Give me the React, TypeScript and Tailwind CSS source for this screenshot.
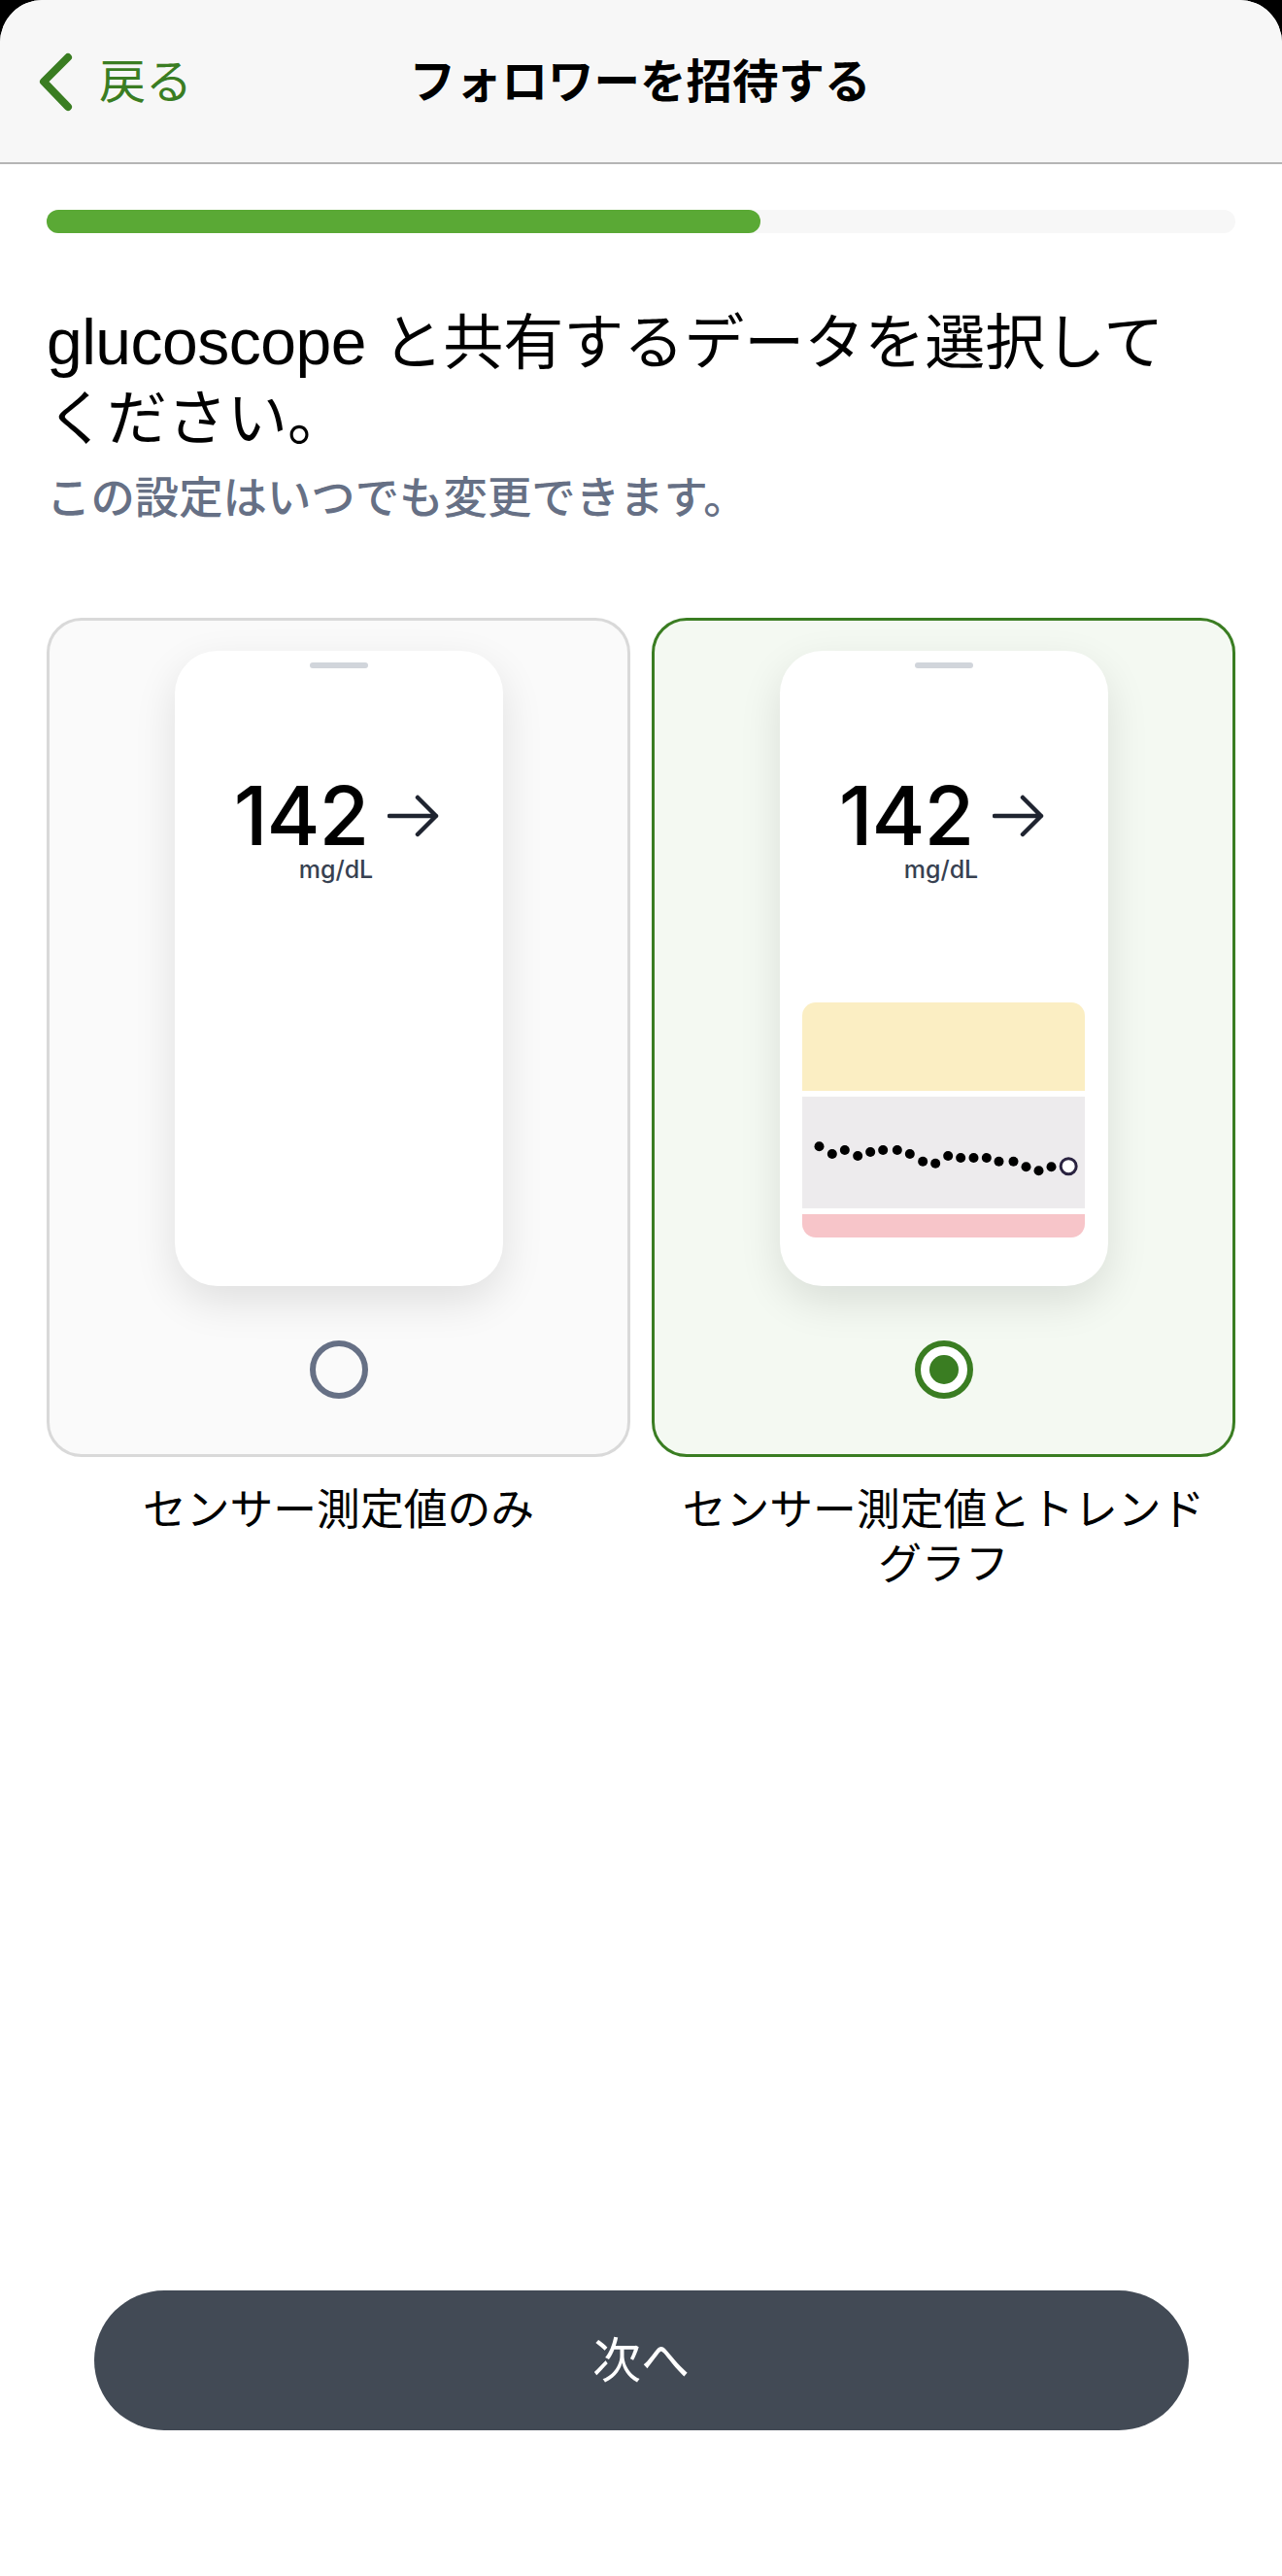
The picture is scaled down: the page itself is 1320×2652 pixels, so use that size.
import React from 'react';

const dots = [
  [190, 541], [230, 564], [269, 552], [309, 570], [348, 558], [387, 552], [431, 552],
  [470, 564], [510, 587], [549, 593], [588, 570], [627, 576], [667, 576], [707, 576],
  [745, 587], [790, 587], [829, 604], [868, 616], [907, 604],
];

const Chart: React.FC = () => (
  <div className="ml-[23px] mt-[124px] flex w-[291px] flex-col gap-[6px]">
    <div className="h-[91px] rounded-t-[14px] bg-[#fbeec3]" />
    <div className="h-[115px] bg-[#edebed]">
      <svg className="block" width="291" height="115" viewBox="138 387 872 345">
        {dots.map(([x, y]) => (
          <circle key={x} cx={x} cy={y} r="15" fill="#000" />
        ))}
        <circle cx="960" cy="602" r="24" fill="#fff" stroke="#2a2340" strokeWidth="9" />
      </svg>
    </div>
    <div className="h-[24px] rounded-b-[14px] bg-[#f7c5c9]" />
  </div>
);

const Phone: React.FC<{ chart?: boolean }> = ({ chart }) => (
  <div className="mx-auto h-[654px] w-[338px] rounded-[44px] bg-white pt-[12px] shadow-[0_16px_44px_rgba(0,0,0,0.11)]">
    <div className="mx-auto h-[6px] w-[60px] rounded-full bg-[#d1d5db]" />
    <div className="mt-[110px] flex items-center justify-center gap-[20px] pr-[4px]">
      <span className="font-['Inter',sans-serif] text-[84px] leading-[84px] font-medium tracking-[-1px] text-black">
        142
      </span>
      <svg width="53" height="44" viewBox="0 0 53 44" fill="none" stroke="#1f2430" strokeWidth="4.5" strokeLinecap="round" strokeLinejoin="round">
        <path d="M2 22H50M31 3L50 22L31 41" />
      </svg>
    </div>
    <div className="pr-[5px] text-center font-['Inter',sans-serif] text-[25px] leading-[26px] font-medium text-[#374151]">
      mg/dL
    </div>
    {chart && <Chart />}
  </div>
);

const Option: React.FC<{ selected?: boolean; label: React.ReactNode }> = ({ selected, label }) => (
  <div className="w-[601px]">
    <div
      className={
        selected
          ? 'h-[864px] rounded-[36px] border-[3px] border-[#3a7d22] bg-[#f4f9f2] pt-[31px]'
          : 'h-[864px] rounded-[36px] border-[3px] border-[#d9d9d9] bg-[#fafafa] pt-[31px]'
      }
    >
      <Phone chart={selected} />
      <div
        className={
          selected
            ? 'mx-auto mt-[56px] flex h-[60px] w-[60px] items-center justify-center rounded-full border-[6px] border-[#3a7d22] bg-white'
            : 'mx-auto mt-[56px] h-[60px] w-[60px] rounded-full border-[6px] border-[#667085]'
        }
      >
        {selected && <div className="h-[30px] w-[30px] rounded-full bg-[#3a7d22]" />}
      </div>
    </div>
    <div className="mt-[26px] text-center text-[44.8px] leading-[56px] text-black">{label}</div>
  </div>
);

export default function App() {
  return (
    <div className="h-[2652px] w-[1320px] bg-black font-['Liberation_Sans','Noto_Sans_CJK_JP',sans-serif]">
      <div className="flex h-full flex-col overflow-hidden rounded-t-[44px] bg-white">
        <header className="relative flex h-[169px] shrink-0 items-center border-b-2 border-[#b5b5b5] bg-[#f7f7f7] pt-[3px]">
          <div className="ml-[38px] flex items-center gap-[26px]">
            <svg width="38" height="62" viewBox="0 0 38 62" fill="none" stroke="#3a7d22" strokeWidth="8" strokeLinecap="round" strokeLinejoin="round">
              <path d="M32 5L7 30L32 56" />
            </svg>
            <span className="text-[48px] leading-none text-[#3a7d22]">戻る</span>
          </div>
          <h1 className="absolute inset-x-0 pr-[2px] text-center text-[47.5px] leading-none font-semibold text-black">
            フォロワーを招待する
          </h1>
        </header>

        <div className="mx-[48px] mt-[47px] h-[24px] shrink-0 rounded-full bg-[#f7f7f7]">
          <div className="h-full w-[735px] rounded-full bg-[#5aa935]" />
        </div>

        <h2 className="mx-[48px] mt-[73px] text-[62px] leading-[78px] text-black">
          <span className="text-[66px] tracking-[-0.5px]">glucoscope</span> と共有するデータを選択して
          <br />
          ください。
        </h2>
        <p className="mx-[48px] mt-[13px] text-[45.4px] leading-[60px] font-medium text-[#667085]">
          この設定はいつでも変更できます。
        </p>

        <div className="mx-[48px] mt-[92px] flex justify-between">
          <Option label="センサー測定値のみ" />
          <Option selected label={<>センサー測定値とトレンド<br />グラフ</>} />
        </div>

        <button className="mx-auto mt-auto mb-[150px] h-[144px] w-[1127px] rounded-[76px] bg-[#424a55] pt-[2px] text-[50px] text-white">
          次へ
        </button>
      </div>
    </div>
  );
}
